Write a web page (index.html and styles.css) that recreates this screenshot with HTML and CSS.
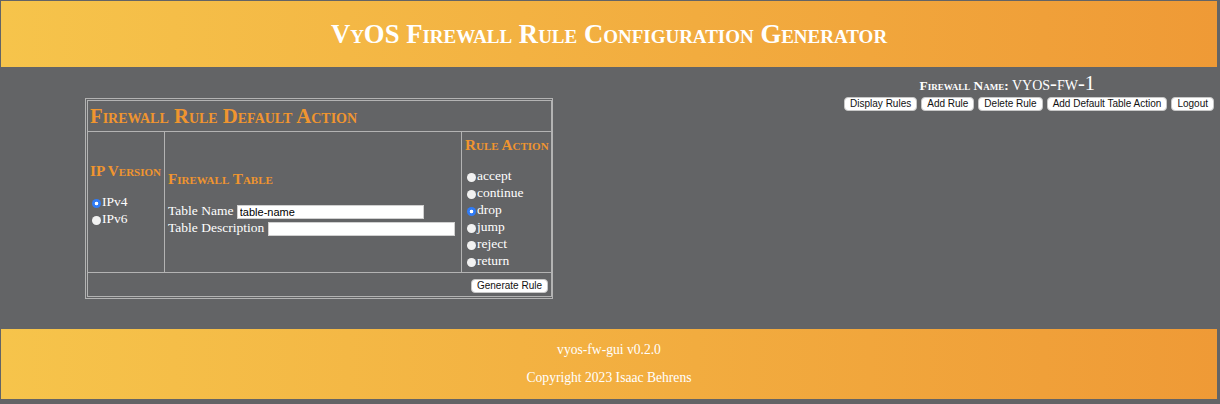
FILE: index.html
```html
<!DOCTYPE html>
<html>
<head>
<meta charset="utf-8">
<title>VyOS Firewall Rule Configuration Generator</title>
<link rel="stylesheet" href="styles.css">
</head>
<body>
<header class="site-header">
  <h1 class="title">VyOS Firewall Rule Configuration Generator</h1>
</header>
<main class="main">
  <form class="card">
    <table class="grid">
      <colgroup>
        <col class="c-ip">
        <col class="c-table">
        <col class="c-action">
      </colgroup>
      <tr>
        <th colspan="3" class="card-title">Firewall Rule Default Action</th>
      </tr>
      <tr class="body-row">
        <td class="col col-ip">
          <h3 class="sub">IP Version</h3>
          <label class="opt"><input type="radio" name="ipv" class="radio" checked>IPv4</label>
          <label class="opt"><input type="radio" name="ipv" class="radio">IPv6</label>
        </td>
        <td class="col col-table">
          <h3 class="sub">Firewall Table</h3>
          <div class="field">Table Name <input type="text" class="text-input" value="table-name"></div>
          <div class="field">Table Description <input type="text" class="text-input"></div>
        </td>
        <td class="col col-action">
          <h3 class="sub">Rule Action</h3>
          <label class="opt"><input type="radio" name="act" class="radio">accept</label>
          <label class="opt"><input type="radio" name="act" class="radio">continue</label>
          <label class="opt"><input type="radio" name="act" class="radio" checked>drop</label>
          <label class="opt"><input type="radio" name="act" class="radio">jump</label>
          <label class="opt"><input type="radio" name="act" class="radio">reject</label>
          <label class="opt"><input type="radio" name="act" class="radio">return</label>
        </td>
      </tr>
      <tr>
        <td colspan="3" class="submit-cell"><button type="button" class="btn">Generate Rule</button></td>
      </tr>
    </table>
  </form>
  <aside class="side">
    <div class="fw-name"><b class="fw-label">Firewall Name:</b> <span class="fw-value">vyos-fw-1</span></div>
    <nav class="actions">
      <button type="button" class="btn">Display Rules</button>
      <button type="button" class="btn">Add Rule</button>
      <button type="button" class="btn">Delete Rule</button>
      <button type="button" class="btn">Add Default Table Action</button>
      <button type="button" class="btn">Logout</button>
    </nav>
  </aside>
</main>
<footer class="site-footer">
  <p class="foot-line">vyos-fw-gui v0.2.0</p>
  <p class="foot-line">Copyright 2023 Isaac Behrens</p>
</footer>
</body>
</html>
```
FILE: styles.css
```css
html, body {
  margin: 0;
  padding: 0;
}
body {
  background: #636466;
  font-family: "Liberation Serif", "Times New Roman", serif;
  font-size: 13.5px;
  color: #fff;
  padding: 1px 3px 5px 1px;
  width: 1216px;
}
.site-header {
  height: 66px;
  background: linear-gradient(to right, #f6c44b, #ef9a36);
  display: flex;
  align-items: center;
  justify-content: center;
}
.title {
  margin: 0;
  font-size: 26.7px;
  font-weight: bold;
  font-variant: small-caps;
  color: #fff;
}
.main {
  height: 262px;
  display: flex;
  justify-content: space-between;
  align-items: flex-start;
}
.card {
  margin: 31px 0 0 84px;
  border: 1px solid #b3b3b3;
  padding: 1px;
  width: 464px;
}
.grid {
  width: 464px;
  table-layout: fixed;
  border-collapse: collapse;
  border: 1px solid #b3b3b3;
}
.c-ip { width: 77px; }
.c-table { width: 297px; }
.c-action { width: 90px; }
.grid th, .grid td {
  border: 1px solid #b3b3b3;
  padding: 0;
}
.card-title {
  text-align: left;
  color: #f0952f;
  font-size: 20.7px;
  font-weight: bold;
  font-variant: small-caps;
  height: 30px;
  padding: 0 2px !important;
  white-space: nowrap;
}
.body-row {
  height: 141px;
}
.col {
  vertical-align: top;
  padding: 0 3px !important;
}
.col-ip {
  padding-left: 2px !important;
  padding-top: 30px !important;
}
.col-table {
  padding-top: 38px !important;
}
.col-action {
  padding-top: 4px !important;
}
.sub {
  margin: 0;
  color: #f0952f;
  font-size: 15.2px;
  font-weight: bold;
  font-variant: small-caps;
  line-height: 17px;
  white-space: nowrap;
}
.col-ip .sub { margin-bottom: 14px; }
.col-table .sub { margin-bottom: 15px; }
.col-action .sub { margin-bottom: 14px; }
.opt {
  display: block;
  height: 17px;
  line-height: 17px;
  white-space: nowrap;
}
.radio {
  appearance: none;
  -webkit-appearance: none;
  width: 9px;
  height: 9px;
  border-radius: 50%;
  background: #f2f2f2;
  margin: 0 1px 0 2px;
  vertical-align: -2px;
}
.radio:checked {
  background: radial-gradient(circle, #fff 0 1.6px, #2f7bf6 2.1px);
}
.field {
  height: 17px;
  line-height: 17px;
  white-space: nowrap;
}
.text-input {
  width: 187px;
  height: 14px;
  box-sizing: border-box;
  border: 1px solid #d0d0d0;
  background: #fff;
  font-family: "Liberation Sans", Arial, sans-serif;
  font-size: 11px;
  padding: 0 2px;
  margin: 0;
  vertical-align: -1px;
  color: #000;
}
.submit-cell {
  text-align: right;
  height: 22px;
  padding: 1px 3px 0 !important;
}
.btn {
  font-family: "Liberation Sans", Arial, sans-serif;
  font-size: 10px;
  height: 14px;
  line-height: 12px;
  padding: 0 5px;
  border: 1px solid #c8c8c8;
  border-radius: 4px;
  background: #fff;
  color: #111;
  vertical-align: middle;
  margin: 0;
}
.side {
  display: flex;
  flex-direction: column;
  align-items: flex-end;
  padding-top: 8px;
  margin-right: 3px;
}
.fw-name {
  font-variant: small-caps;
  margin-right: 119px;
  height: 22px;
  line-height: 16px;
  white-space: nowrap;
}
.fw-label {
  font-size: 13.3px;
}
.fw-value {
  font-size: 20.5px;
}
.actions {
  display: flex;
  gap: 4px;
}
.site-footer {
  height: 70px;
  background: linear-gradient(to right, #f6c44b, #ef9a36);
  display: flex;
  flex-direction: column;
  align-items: center;
  justify-content: center;
  gap: 12px;
}
.foot-line {
  margin: 0;
  font-size: 13.6px;
  line-height: 16px;
}
```
